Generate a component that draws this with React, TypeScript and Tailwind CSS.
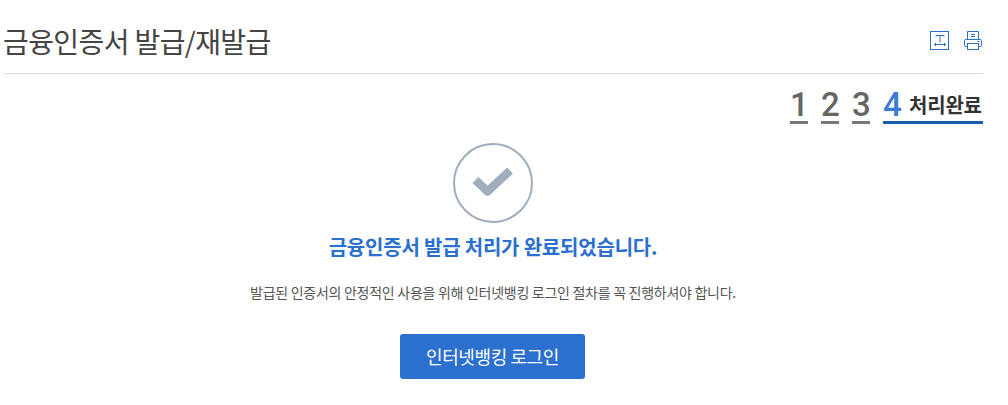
export default function App() {
  return (
    <div className="w-[1008px] h-[405px] bg-white overflow-hidden pl-[3px] pr-[25px] font-['Noto_Sans_CJK_KR',sans-serif] text-[#333]">
      <div className="flex justify-between items-center h-[74px] border-b border-[#dddddd] pt-[9px]">
        <h1 className="text-[28px] leading-[40px] tracking-[-0.6px] text-[#444] font-normal">금융인증서 발급/재발급</h1>
        <div className="flex items-center gap-[15px] mb-[1px]">
          <svg width="19" height="19" viewBox="0 0 19 19" fill="none" stroke="#2b6fcf" strokeWidth="1">
            <rect x="0.5" y="0.5" width="18" height="18" />
            <path d="M6 4.5h8M6 4.5v1M14 4.5v1M10 4.5v7M4.5 13.5h11M4.5 13.5l1.5-1.5M4.5 13.5l1.5 1.5M15.5 13.5l-1.5-1.5M15.5 13.5l-1.5 1.5" />
          </svg>
          <svg width="19" height="19" viewBox="0 0 19 19" fill="none" stroke="#2b6fcf" strokeWidth="1">
            <path d="M3.5 8V0.5h11V8" />
            <path d="M7 3.5h4M7 5.5h4" />
            <path d="M3 15.5H1.5a1 1 0 0 1-1-1v-5a1 1 0 0 1 1-1h15a1 1 0 0 1 1 1v5a1 1 0 0 1-1 1H15" />
            <rect x="3.5" y="12.5" width="11" height="6" fill="#fff" />
            <path d="M13.5 10.5h2" />
          </svg>
        </div>
      </div>
      <div className="flex justify-end items-start gap-[13px] h-[50px] pt-[13px]">
        {["1", "2", "3"].map((n) => (
          <span key={n} className="w-[18px] h-[37px] border-b-[3px] border-[#777] text-[33px] leading-[36px] font-medium text-[#666] text-center font-['Roboto',sans-serif]">{n}</span>
        ))}
        <div className="flex items-start h-[37px] border-b-[3px] border-[#1a5bb0] w-[100px]">
          <span className="text-[33px] leading-[36px] font-medium text-[#3b7bd6] w-[18px] text-center font-['Roboto',sans-serif]">4</span>
          <span className="text-[20px] leading-[36px] font-bold tracking-[-0.2px] text-[#333] ml-[8px] whitespace-nowrap">처리완료</span>
        </div>
      </div>
      <div className="w-[1008px] ml-[-3px] flex flex-col items-center pr-[22px]">
        <svg className="mt-[19px]" width="80" height="80" viewBox="0 0 80 80" fill="none">
          <circle cx="40" cy="40" r="39" stroke="#9fadbd" strokeWidth="2" />
          <path d="M22.5 37L34.5 48.5L57 27.5" stroke="#9fadbd" strokeWidth="8.5" strokeLinejoin="round" />
        </svg>
        <p className="mt-[10px] text-[20px] leading-[28px] font-bold tracking-[-0.2px] text-[#2b6fcf]">금융인증서 발급 처리가 완료되었습니다.</p>
        <p className="mt-[21px] text-[14px] leading-[20px] tracking-[-0.28px] text-[#555]">발급된 인증서의 안정적인 사용을 위해 인터넷뱅킹 로그인 절차를 꼭 진행하셔야 합니다.</p>
        <button className="mt-[32px] ml-[-1px] w-[185px] h-[45px] rounded-[3px] bg-[#2b6fcf] text-white text-[18px] tracking-[-0.4px]">인터넷뱅킹 로그인</button>
      </div>
    </div>
  );
}
